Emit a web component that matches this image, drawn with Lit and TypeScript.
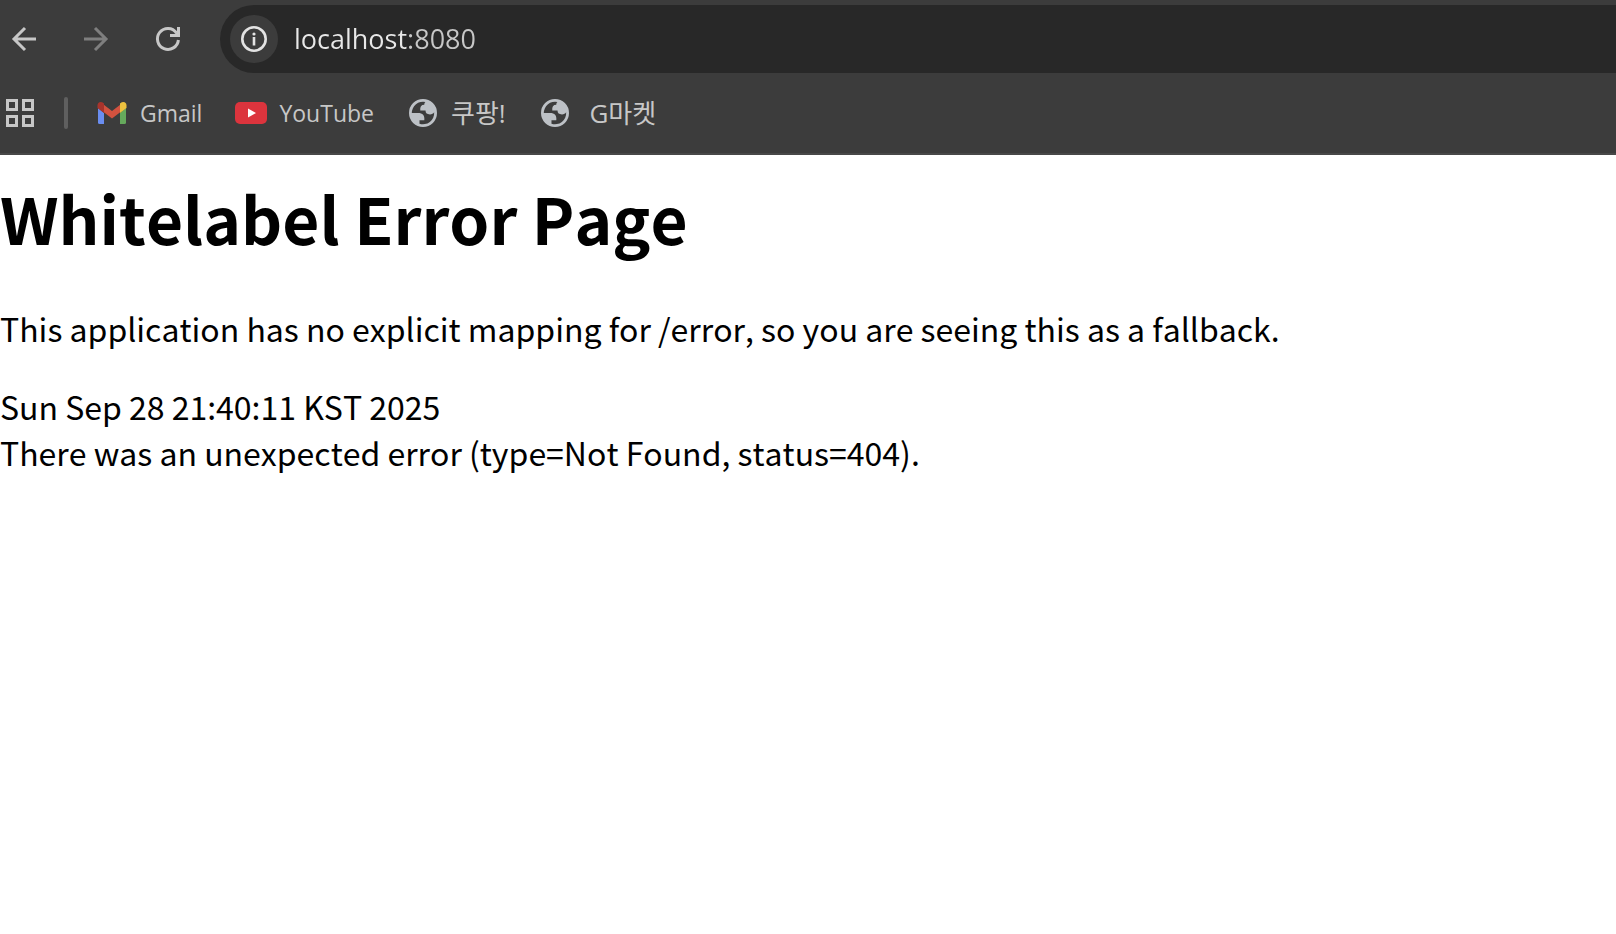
import { LitElement, html, css, svg, nothing } from "lit";
import { customElement } from "lit/decorators.js";

const gmailIcon = html`<svg class="icon" viewBox="0 0 32 32" aria-hidden="true">
  <path fill="#6a8df0" d="M2 11l6 5v11H3.500a1.500 1.500 0 0 1-1.500-1.500z" />
  <path fill="#65a95c" d="M24 16l6-5v14.500a1.500 1.500 0 0 1-1.500 1.500H24z" />
  <path fill="#d2523f" d="M7.500 7.500L16 14l8.500-6.500V15L16 21.500 7.500 15z" />
  <path fill="#a8342c" d="M1.500 8.500C1.500 5 5 4 8 6.500V16l-6.500-5z" />
  <path fill="#edc23f" d="M30.500 8.500C30.500 5 27 4 24 6.500V16l6.500-5z" />
</svg>`;

const youtubeIcon = html`<svg class="icon" viewBox="0 0 32 32" aria-hidden="true">
  <rect y="5" width="32" height="22" rx="5" fill="#dc343d" />
  <path fill="#fff" d="M13 11.500v9l8-4.500z" />
</svg>`;

const globeIcon = html`<svg class="icon" viewBox="0.571 0.571 22.857 22.857" aria-hidden="true">
  <path
    fill="#bdc1c6"
    fill-rule="evenodd"
    d="M12 2a10 10 0 1 1 0 20a10 10 0 1 1 0-20zM4 12h4.400c3.407.022 4.922 1.730 4.543 5.127H9.488v2.470a8.004 8.004 0 0 0 10.498-8.080C19.327 12.504 18.332 13 17 13c-2.137 0-3.206-.916-3.206-2.750h-3.748c-.274-2.728.683-4.092 2.870-4.092 0-.975.327-1.597.811-1.970A8.004 8.004 0 0 0 4 12z"
  />
</svg>`;

const bookmarks = [
  { label: "Gmail", icon: gmailIcon },
  { label: "YouTube", icon: youtubeIcon },
  { label: "쿠팡!", icon: globeIcon, lang: "ko" },
  { label: "\u00a0G마켓", icon: globeIcon, lang: "ko" },
];

@customElement("app-root")
export class AppRoot extends LitElement {
  static styles = css`
    :host {
      display: block;
      min-height: 100vh;
      background: #fff;
      color: #000;
    }
    .chrome {
      background: #3c3c3c;
      border-bottom: 2px solid #484848;
      font-family: "Open Sans", "Noto Sans CJK KR", sans-serif;
      color: #c7c7c7;
    }
    .toolbar {
      display: flex;
      align-items: center;
      padding-top: 5px;
    }
    .nav {
      display: flex;
      gap: 24px;
      padding-right: 28px;
    }
    button {
      display: block;
      padding: 0;
      border: 0;
      background: none;
      color: inherit;
    }
    .nav button {
      width: 48px;
      height: 48px;
    }
    .nav button:disabled {
      color: #7f7f7f;
    }
    svg {
      display: block;
    }
    .omnibox {
      flex: 1;
      display: flex;
      align-items: center;
      gap: 16px;
      box-sizing: border-box;
      height: 68px;
      padding-left: 10px;
      border-radius: 34px 0 0 34px;
      background: #282828;
    }
    .info {
      border-radius: 50%;
      background: #3c3c3c;
      color: #e3e3e3;
    }
    .url {
      flex: 1;
      min-width: 0;
      height: 40px;
      padding: 0;
      border: 0;
      outline: 0;
      font: 27px/40px "Open Sans", sans-serif;
      color: #e8e8e8;
      background: linear-gradient(90deg, #e8e8e8 113px, #c7c7c7 113px);
      -webkit-background-clip: text;
      background-clip: text;
      -webkit-text-fill-color: transparent;
    }
    .bookmarks {
      display: flex;
      align-items: center;
      height: 80px;
      padding-left: 4px;
    }
    .divider {
      width: 4px;
      height: 32px;
      margin: 0 28px;
      border-radius: 2px;
      background: #5f5f5f;
    }
    .links {
      display: flex;
      gap: 33px;
    }
    .bookmark {
      display: flex;
      align-items: center;
      gap: 12px;
      font-size: 23px;
      line-height: 32px;
      color: inherit;
      text-decoration: none;
      white-space: nowrap;
    }
    .bookmark:lang(ko) {
      font-size: 26px;
    }
    .icon {
      width: 32px;
      height: 32px;
    }
    .page {
      padding-top: 16px;
      font-family: "Noto Sans CJK KR", sans-serif;
      font-size: 32px;
      font-kerning: none;
      line-height: 46px;
    }
    h1 {
      margin: 0 0 42px;
      font-size: 64px;
      line-height: 92px;
    }
    p {
      margin: 0 0 32px;
    }
  `;

  render() {
    return html`
      <header class="chrome">
        <div class="toolbar">
          <nav class="nav" aria-label="History">
            <button aria-label="Back">
              <svg width="48" height="48" fill="none" stroke="currentColor" stroke-width="3">
                <path d="M36 24H14M25 13L14 24L25 35" />
              </svg>
            </button>
            <button aria-label="Forward" disabled>
              <svg width="48" height="48" fill="none" stroke="currentColor" stroke-width="3">
                <path d="M12 24H34M23 13L34 24L23 35" />
              </svg>
            </button>
            <button aria-label="Reload">
              <svg width="48" height="48" fill="none" stroke="currentColor" stroke-width="3">
                <path d="M34.400 25A10.500 10.500 0 1 1 32.500 17.800" />
                <path fill="currentColor" stroke="none" d="M33 12h3v10H26v-3h4.500L33 17z" />
              </svg>
            </button>
          </nav>
          <div class="omnibox">
            <button class="info" aria-label="Site information">
              <svg width="48" height="48" fill="currentColor">
                <circle cx="24" cy="24" r="11.700" fill="none" stroke="currentColor" stroke-width="2.600" />
                <circle cx="24" cy="19" r="1.600" />
                <rect x="22.700" y="22" width="2.600" height="8.500" />
              </svg>
            </button>
            <input class="url" aria-label="Address" spellcheck="false" value="localhost:8080" />
          </div>
        </div>
        <div class="bookmarks">
          <button aria-label="Apps">
            <svg width="32" height="32" fill="none" stroke="currentColor" stroke-width="3">
              ${[3.5, 19.5].map((x) =>
                [3.5, 19.5].map((y) => svg`<rect x=${x} y=${y} width="9" height="9" />`)
              )}
            </svg>
          </button>
          <div class="divider"></div>
          <nav class="links" aria-label="Bookmarks">
            ${bookmarks.map(
              (b) => html`<a class="bookmark" href="#" lang=${b.lang ?? nothing}>${b.icon}<span>${b.label}</span></a>`
            )}
          </nav>
        </div>
      </header>
      <main class="page">
        <h1>Whitelabel Error Page</h1>
        <p>This application has no explicit mapping for /error, so you are seeing this as a fallback.</p>
        <div>Sun Sep 28 21:40:11 KST 2025</div>
        <div>There was an unexpected error (type=Not Found, status=404).</div>
      </main>
    `;
  }
}
